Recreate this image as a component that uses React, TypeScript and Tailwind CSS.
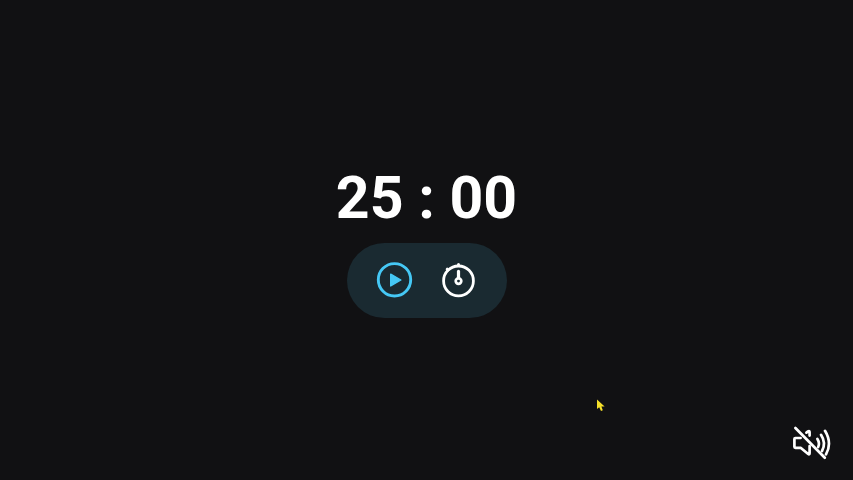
import { useState } from "react";

function PlayIcon() {
  return (
    <svg viewBox="0 0 40 40" className="size-10" fill="none" aria-hidden="true">
      <circle cx="19.5" cy="18.8" r="16.2" stroke="#45c8f5" strokeWidth="2.9" />
      <path d="M15.7 13.1 25.9 19 15.7 24.9Z" fill="#45c8f5" stroke="#45c8f5" strokeWidth="1.4" strokeLinejoin="round" />
    </svg>
  );
}

function TimerIcon() {
  return (
    <svg viewBox="0 0 40 40" className="size-10" fill="none" stroke="#ffffff" strokeLinecap="round" aria-hidden="true">
      <circle cx="19.5" cy="19.9" r="14.9" strokeWidth="2.8" />
      <path d="M19.5 4.6V3.6" strokeWidth="3" />
      <path d="M9 9 8.2 8.2" strokeWidth="3" />
      <path d="M19.5 16.4V10.4" strokeWidth="3.2" />
      <circle cx="19.5" cy="20.1" r="2.8" strokeWidth="2.7" />
    </svg>
  );
}

function MutedIcon() {
  return (
    <svg
      viewBox="0 0 40 40"
      className="size-10"
      fill="none"
      stroke="#ffffff"
      strokeWidth="2.7"
      strokeLinecap="round"
      strokeLinejoin="round"
      aria-hidden="true"
    >
      <path d="M8.6 15H3.4Q2.4 15 2.4 16V23.8Q2.4 24.8 3.4 24.8H8.6L16.2 31Q17.6 32 17.6 30V23" />
      <path d="M14.4 9.6 16 8.4Q17.6 7.4 17.6 9.2V12.6" />
      <path d="M25.4 16Q28 20.2 26.2 24" />
      <path d="M29 11.8Q34.4 20 30 28" />
      <path d="M33 7.8Q40.4 20 34 31.4" />
      <path d="M3.4 5 32.8 34.8" />
    </svg>
  );
}

export default function App() {
  const [muted, setMuted] = useState(true);

  return (
    <main className="relative flex min-h-screen flex-col items-center justify-center gap-[9px] bg-[#111113] font-['Roboto',sans-serif]">
      <h1 className="text-[59px] leading-[72px] font-bold text-white">25 : 00</h1>

      <div className="flex h-[75px] items-center gap-6 rounded-full bg-[#1a2a31] px-7">
        <button type="button" aria-label="Start">
          <PlayIcon />
        </button>
        <button type="button" aria-label="Timer settings">
          <TimerIcon />
        </button>
      </div>

      <button
        type="button"
        aria-label="Sound"
        aria-pressed={!muted}
        onClick={() => setMuted(!muted)}
        className="absolute right-[21px] bottom-[17px]"
      >
        <MutedIcon />
      </button>

      <svg viewBox="0 0 9 12" className="absolute top-[399px] left-[597px] h-3 w-[9px]" aria-hidden="true">
        <path d="M0 0.6V10L2.2 8.2L4 12L5.8 11.2L4.4 7.6H7.6Z" fill="#f5e02a" />
      </svg>
    </main>
  );
}
